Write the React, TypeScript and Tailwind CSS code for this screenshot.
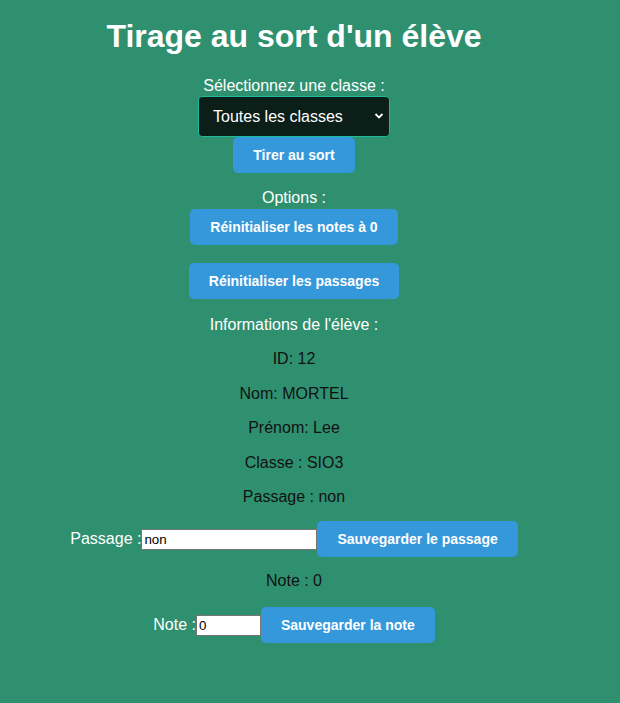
import { useState } from "react";

const btn =
  "h-9 rounded-[5px] bg-[#3498db] px-5 text-sm font-bold text-white";

export default function App() {
  const [passage, setPassage] = useState("non");
  const [note, setNote] = useState("0");

  return (
    <div className="min-h-[703px] w-full bg-[#2f9070] font-['Liberation_Sans',Arial,sans-serif]">
      <div className="flex w-[588px] flex-col items-center text-base leading-[18px]">
        <h1 className="mt-[18px] text-[32px] font-bold leading-[36px] text-white">
          Tirage au sort d'un élève
        </h1>

        {/* Choix de la classe */}
        <label className="mt-[23px] text-white">Sélectionnez une classe :</label>
        <div className="relative mt-px">
          <select className="h-[41px] w-[192px] appearance-none rounded-[4px] border border-[#1abc9c] bg-[#0b1e18] pl-[14px] text-white outline-none">
            <option>Toutes les classes</option>
          </select>
          <svg
            className="pointer-events-none absolute right-[6px] top-[16px]"
            width="10"
            height="8"
            viewBox="0 0 10 8"
          >
            <path d="M1.5 2 L5 5.5 L8.5 2" fill="none" stroke="white" strokeWidth="1.8" />
          </svg>
        </div>
        <button className={btn}>Tirer au sort</button>

        {/* Options */}
        <p className="mt-4 text-white">Options :</p>
        <button className={`${btn} mt-[2px]`}>Réinitialiser les notes à 0</button>
        <button className={`${btn} mt-[18px]`}>Réinitialiser les passages</button>

        {/* Informations */}
        <p className="mt-[17px] text-white">Informations de l'élève :</p>
        <div className="mt-[16.4px] flex flex-col items-center gap-4 leading-[18.4px] text-[#111]">
          <p>ID: 12</p>
          <p>Nom: MORTEL</p>
          <p>Prénom: Lee</p>
          <p>Classe : SIO3</p>
          <p>Passage : non</p>
        </div>

        <div className="mt-[15px] flex items-center">
          <span className="text-white">Passage :</span>
          <input
            value={passage}
            onChange={(e) => setPassage(e.target.value)}
            className="h-[21px] w-[176px] border border-[#767676] bg-white px-[2px] text-[13.33px] text-black outline-none"
          />
          <button className={btn}>Sauvegarder le passage</button>
        </div>

        <p className="mt-[15px] text-[#111]">Note : 0</p>

        <div className="mt-[17px] flex items-center">
          <span className="text-white">Note :</span>
          <input
            value={note}
            onChange={(e) => setNote(e.target.value)}
            className="h-[21px] w-[65px] border border-[#767676] bg-white px-[2px] text-[13.33px] text-black outline-none"
          />
          <button className={btn}>Sauvegarder la note</button>
        </div>
      </div>
    </div>
  );
}
